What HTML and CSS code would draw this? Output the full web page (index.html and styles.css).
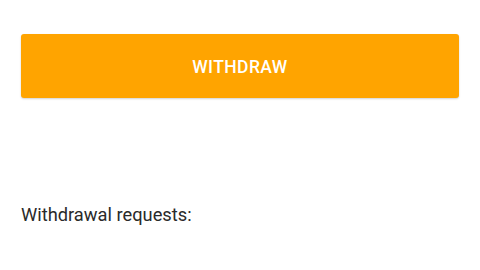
FILE: index.html
```html
<!DOCTYPE html>
<html>
<head>
<meta charset="utf-8">
<link rel="stylesheet" href="styles.css">
</head>
<body>
<div class="page">
  <button class="withdraw">WITHDRAW</button>
  <div class="label">Withdrawal requests:</div>
</div>
</body>
</html>
```
FILE: styles.css
```css
html, body {
  margin: 0;
  padding: 0;
  background: #ffffff;
}
.page {
  padding: 34px 21px 0 21px;
  display: flex;
  flex-direction: column;
  font-family: Roboto, "Liberation Sans", sans-serif;
}
.withdraw {
  height: 64px;
  width: 100%;
  border: none;
  border-radius: 3px;
  background: #ffa400;
  color: #ffffff;
  font-family: Roboto, "Liberation Sans", sans-serif;
  font-weight: 500;
  font-size: 17.5px;
  letter-spacing: 0.4px;
  padding: 2px 0 0 0;
  box-shadow: 0 1px 2px rgba(0,0,0,0.18);
}
.label {
  margin-top: 106px;
  font-size: 18.3px;
  color: #2a2a2a;
}
```
